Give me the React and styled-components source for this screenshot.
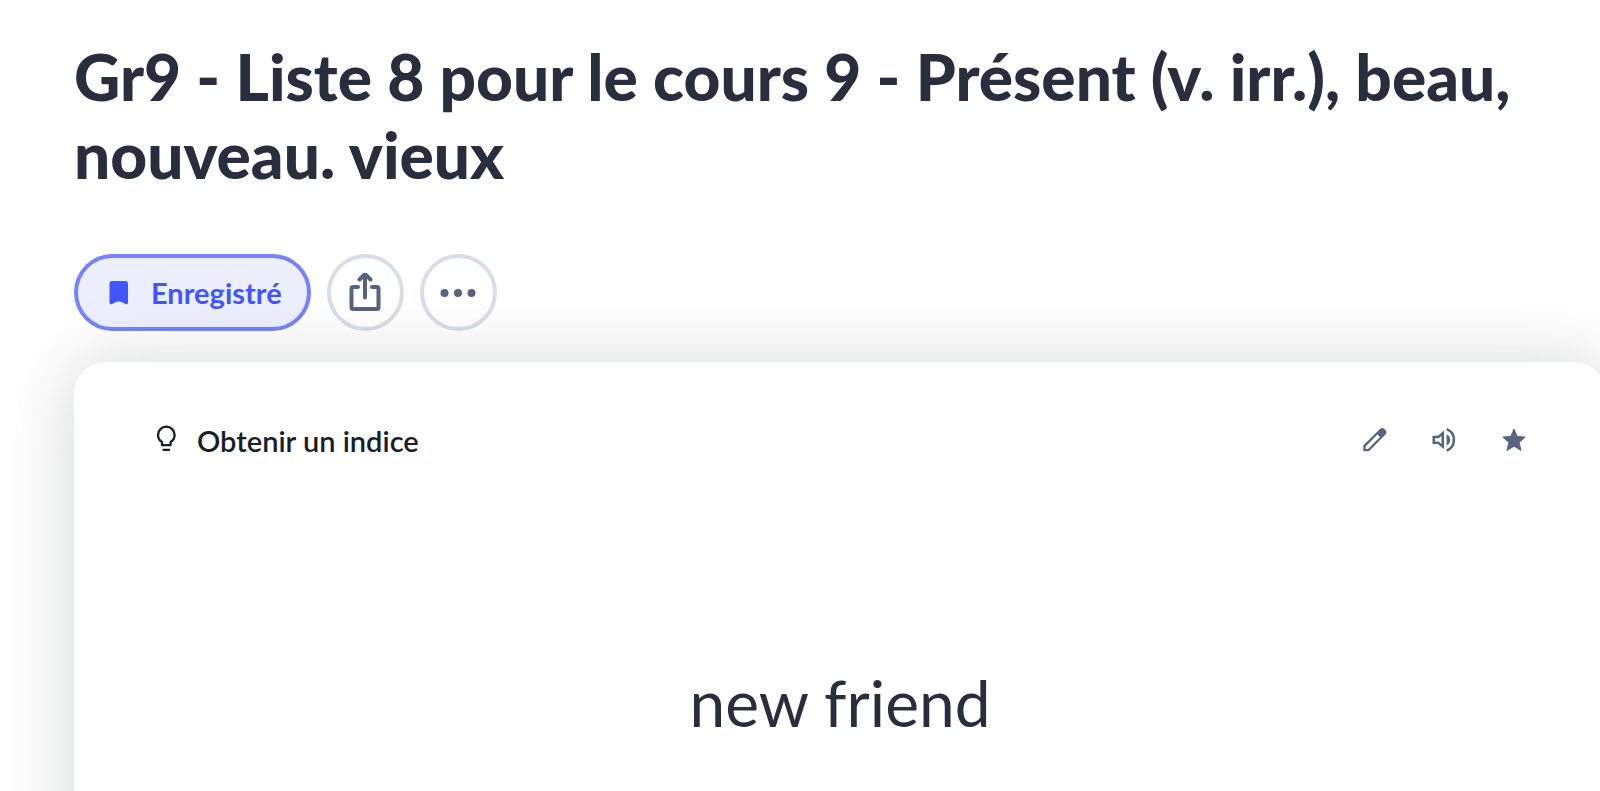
import React from 'react'
import styled, { createGlobalStyle } from 'styled-components'

const GlobalStyle = createGlobalStyle`
  *, *::before, *::after {
    box-sizing: border-box;
  }
  body {
    margin: 0;
    background: #fff;
    color: #282e3e;
    font-family: Lato, 'Open Sans', sans-serif;
  }
  button {
    font: inherit;
    cursor: pointer;
  }
`

const Page = styled.main`
  display: flex;
  flex-direction: column;
  height: 100vh;
  padding: 38px 0 0 74px;
  overflow: hidden;
`

const Title = styled.h1`
  margin: 0;
  padding-right: 40px;
  font-size: 64px;
  font-weight: 900;
  line-height: 78px;
`

const Toolbar = styled.div`
  display: flex;
  flex: none;
  gap: 16px;
  margin: 60px 0 31px;
`

const PillButton = styled.button`
  display: flex;
  align-items: center;
  justify-content: center;
  gap: 16px;
  height: 77px;
  min-width: 77px;
  padding: ${props => props.$saved ? '0 25px' : '0'};
  border: 4px solid ${props => props.$saved ? '#7583ff' : '#d9dde8'};
  border-radius: 39px;
  background: ${props => props.$saved ? '#edefff' : 'transparent'};
  color: ${props => props.$saved ? '#4255ff' : '#586380'};
  font-size: 29px;
  font-weight: 700;
`

const Card = styled.section`
  position: relative;
  display: flex;
  flex: none;
  flex-direction: column;
  min-height: 700px;
  margin-right: -6px;
  padding: 62px 76px 80px;
  border-radius: 32px;
  background: #fff;
  box-shadow: 0 4px 72px rgba(10, 14, 26, 0.18);
`

const CardHeader = styled.header`
  display: flex;
  align-items: center;
  justify-content: space-between;
`

const HintButton = styled.button`
  display: flex;
  align-items: center;
  gap: 15px;
  height: 32px;
  padding: 0;
  border: 0;
  background: none;
  color: #1a1d28;
  font-size: 29px;
  font-weight: 600;
`

const Actions = styled.div`
  display: flex;
  gap: 38px;
`

const IconButton = styled.button`
  width: 32px;
  height: 32px;
  padding: 0;
  border: 0;
  background: none;
  color: #586380;
`

const Svg = styled.svg`
  display: block;
  flex: none;
  width: ${props => props.$size || 32}px;
  height: ${props => props.$size || 32}px;
  fill: currentColor;
`

const Term = styled.p`
  margin: 208px 0 0;
  font-size: 64px;
  line-height: 78px;
  text-align: center;
`

const BookmarkIcon = () =>
  <Svg viewBox='0 0 32 32' aria-hidden='true'>
    <path d='M9 4h13.500a2.500 2.500 0 0 1 2.500 2.500V25.500c0 1.600-1.300 2.200-2.600 1.600L19 25.300c-2-1.200-4.400-1.200-6.400 0l-3.500 1.800C7.800 27.700 6.500 27.100 6.500 25.500v-19A2.500 2.500 0 0 1 9 4z' />
  </Svg>

const ShareIcon = () =>
  <Svg $size={40} viewBox='0 0 40 40' aria-hidden='true'>
    <g fill='none' stroke='currentColor' strokeWidth='4' strokeLinecap='round' strokeLinejoin='round'>
      <path d='M13 14H8a1.500 1.500 0 0 0-1.500 1.500v19a1.500 1.500 0 0 0 1.500 1.500h24a1.500 1.500 0 0 0 1.500-1.500v-19a1.500 1.500 0 0 0-1.500-1.500h-5M20 24.500V2M14.500 6.500L20 1l5.500 5.500' />
    </g>
  </Svg>

const MoreIcon = () =>
  <Svg $size={40} viewBox='0 0 40 40' aria-hidden='true'>
    <circle cx='6.500' cy='20' r='4' />
    <circle cx='20' cy='20' r='4' />
    <circle cx='33.500' cy='20' r='4' />
  </Svg>

const BulbIcon = () =>
  <Svg viewBox='0 0 32 32' aria-hidden='true'>
    <g fill='none' stroke='currentColor' strokeWidth='2.300' strokeLinecap='round'>
      <path d='M12 21.200v-3.300C9.400 16.400 8 14 8 11a8.300 8.300 0 0 1 16.600 0c0 3-1.400 5.400-4 6.900v3.300z' strokeLinejoin='round' />
      <path d='M13.500 25.800h5.600' />
    </g>
  </Svg>

const EditIcon = () =>
  <Svg viewBox='0 0 32 32' aria-hidden='true'>
    <path
      fillRule='evenodd'
      d='M5.300 21.300L22 5c1.400-1.400 3-1.300 4.300 0l1.200 1.300c1.300 1.300 1.300 2.900 0 4.200L11 27.300H5.300zM7.600 22.400v2.600H10L22 13l-2.500-2.500z'
    />
  </Svg>

const AudioIcon = () =>
  <Svg viewBox='0 0 32 32' aria-hidden='true'>
    <path fillRule='evenodd' d='M4.500 11.700h5.300L16 6.500v18.800l-6.200-5.200H4.500zM7 14.200v3.400h3.700l2.800 2.300v-8l-2.800 2.300z' />
    <path d='M18.600 10.600c2.400.9 3.600 2.900 3.600 5.300s-1.200 4.400-3.600 5.300z' />
    <path d='M18.600 5.200a11.500 11.500 0 0 1 0 21.400' fill='none' stroke='currentColor' strokeWidth='2.500' />
  </Svg>

const StarIcon = () =>
  <Svg viewBox='0 0 32 32' aria-hidden='true'>
    <path
      d='M16 5l3.200 7.400 8 .7-6.100 5.300 1.900 8L16 22.200l-7 4.200 1.900-8-6.100-5.300 8-.7z'
      stroke='currentColor'
      strokeWidth='1'
      strokeLinejoin='round'
    />
  </Svg>

const App = () =>
  <>
    <GlobalStyle />
    <Page>
      <Title>Gr9 - Liste 8 pour le cours 9 - Présent (v. irr.), beau, nouveau. vieux</Title>
      <Toolbar>
        <PillButton type='button' $saved>
          <BookmarkIcon />
          Enregistré
        </PillButton>
        <PillButton type='button' aria-label='Partager'>
          <ShareIcon />
        </PillButton>
        <PillButton type='button' aria-label='Plus'>
          <MoreIcon />
        </PillButton>
      </Toolbar>
      <Card>
        <CardHeader>
          <HintButton type='button'>
            <BulbIcon />
            Obtenir un indice
          </HintButton>
          <Actions>
            <IconButton type='button' aria-label='Modifier'>
              <EditIcon />
            </IconButton>
            <IconButton type='button' aria-label='Écouter'>
              <AudioIcon />
            </IconButton>
            <IconButton type='button' aria-label='Favori'>
              <StarIcon />
            </IconButton>
          </Actions>
        </CardHeader>
        <Term>new friend</Term>
      </Card>
    </Page>
  </>

export default App
